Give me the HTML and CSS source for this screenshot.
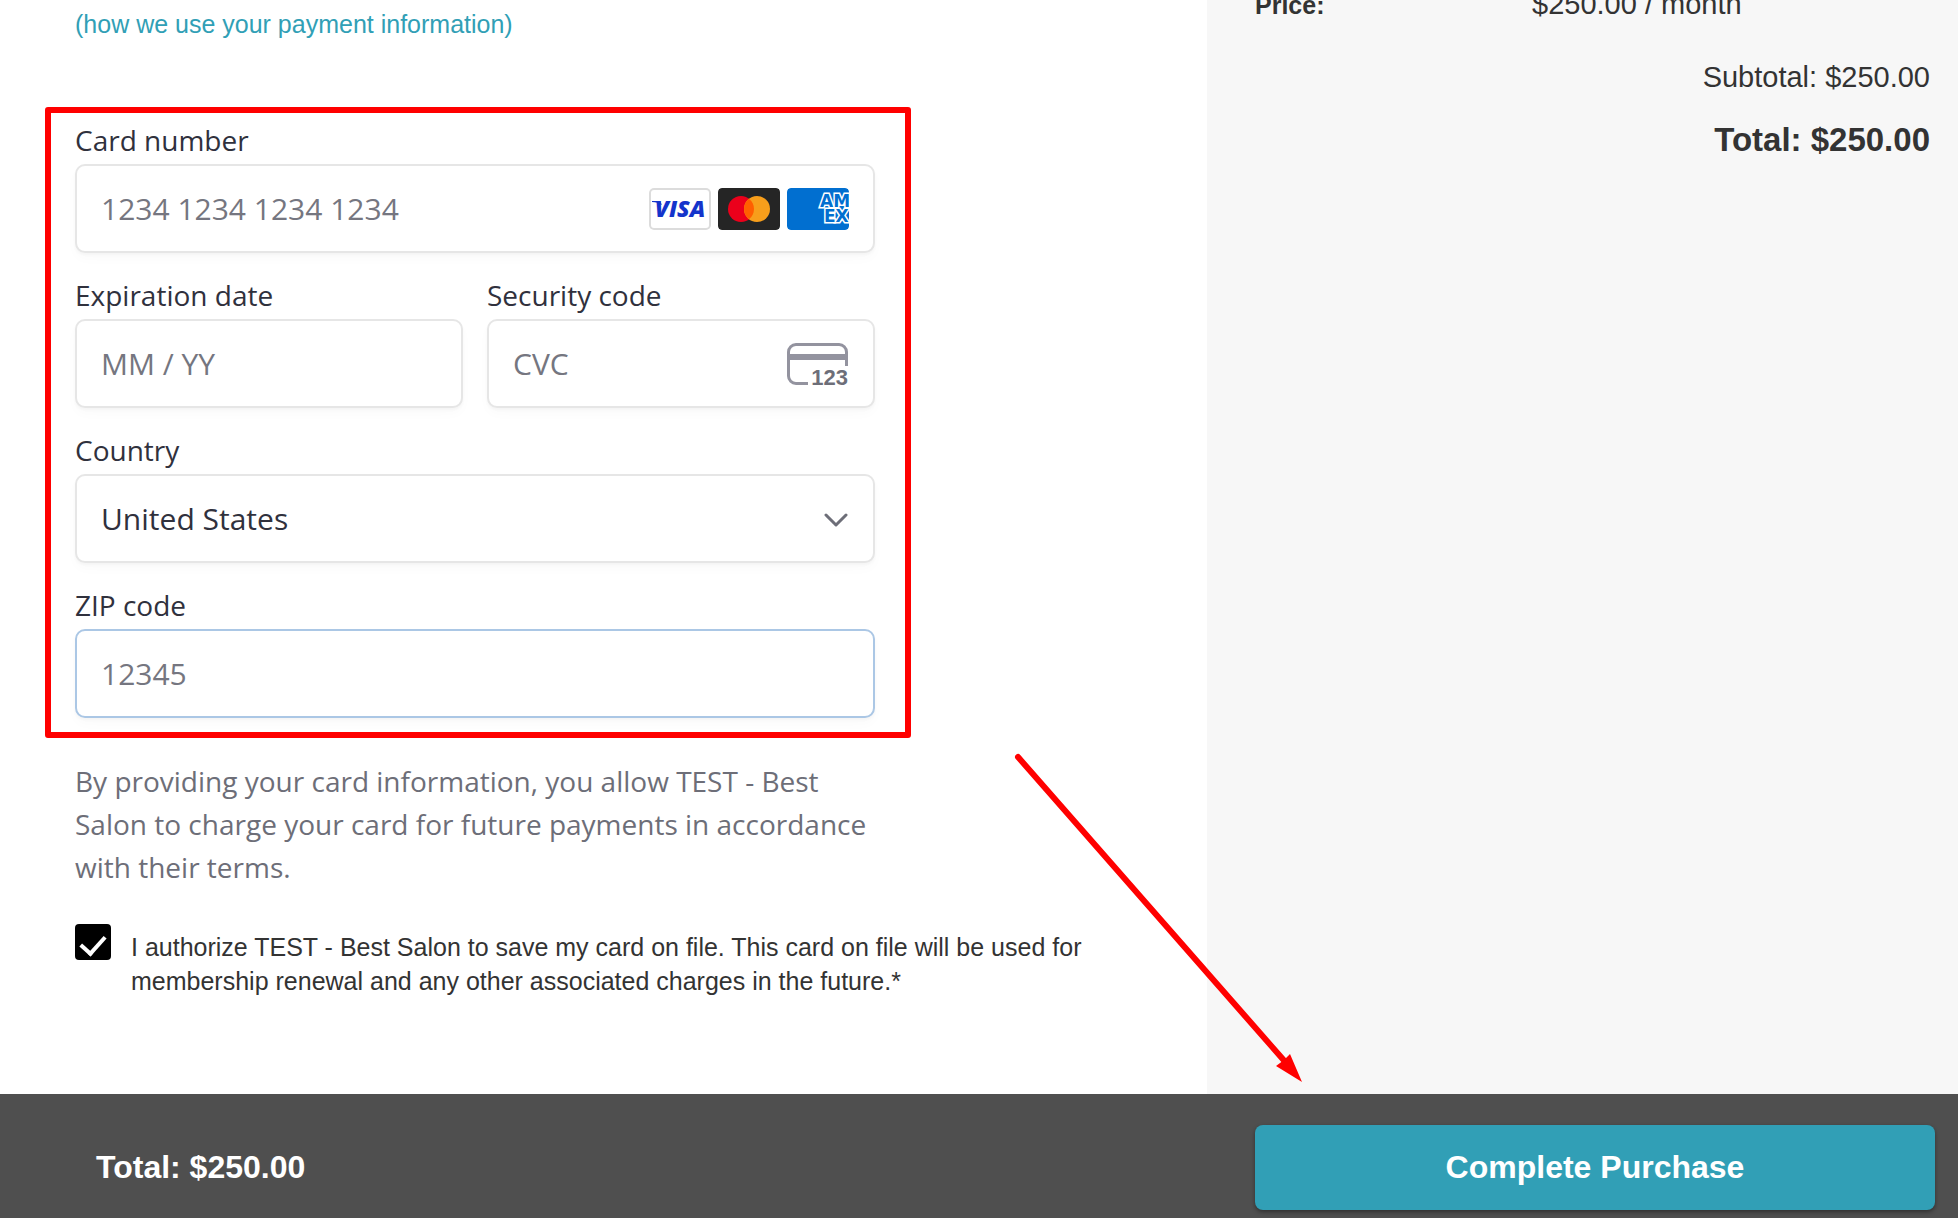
FILE: index.html
```
<!DOCTYPE html>
<html lang="en">

<head>
    <meta charset="UTF-8">
    <meta name="viewport" content="width=device-width, initial-scale=1.0">
    <title>Checkout</title>
    <link rel="stylesheet" href="styles.css">
</head>

<body>
    <div class="page">
        <main class="payment">
            <a class="info-link" href="#">(how we use your payment information)</a>

            <form class="card-form" id="payment-form">
                <div class="field">
                    <label for="number">Card number</label>
                    <div class="control">
                        <input type="text" id="number" placeholder="1234 1234 1234 1234">
                        <div class="brands">
                            <svg viewBox="0 0 62 42" role="img" aria-label="Visa">
                                <rect x="1" y="1" width="60" height="40" rx="4" fill="#fff" stroke="#dcdcdc" stroke-width="2" />
                                <text x="31" y="29" text-anchor="middle" class="visa">VISA</text>
                                <path d="M3 13h8l2 4c-3-2-6-3-10-3z" fill="#1434cb" />
                            </svg>
                            <svg viewBox="0 0 62 42" role="img" aria-label="Mastercard">
                                <rect width="62" height="42" rx="4" fill="#252525" />
                                <circle cx="23" cy="21" r="13" fill="#eb001b" />
                                <circle cx="39" cy="21" r="13" fill="#f79e1b" />
                                <path d="M31 10.750a13 13 0 0 1 0 20.500a13 13 0 0 1 0-20.500z" fill="#ff5f00" />
                            </svg>
                            <svg viewBox="0 0 62 42" role="img" aria-label="American Express">
                                <rect width="62" height="42" rx="4" fill="#016fd0" />
                                <text x="33" y="19" class="amex">AM</text>
                                <text x="37" y="34" class="amex">EX</text>
                            </svg>
                        </div>
                    </div>
                </div>

                <div class="row">
                    <div class="field">
                        <label for="expiry">Expiration date</label>
                        <div class="control">
                            <input type="text" id="expiry" placeholder="MM / YY">
                        </div>
                    </div>
                    <div class="field">
                        <label for="cvc">Security code</label>
                        <div class="control">
                            <input type="text" id="cvc" placeholder="CVC">
                            <svg class="cvc-icon" viewBox="0 0 62 44" aria-hidden="true">
                                <path d="M59.500 24V10a7.500 7.500 0 0 0-7.500-7.500H9A7.500 7.500 0 0 0 1.500 10v24A7.500 7.500 0 0 0 9 41.500h12" fill="none" stroke="#93939f" stroke-width="3" />
                                <rect x="2" y="12" width="58" height="6" fill="#93939f" />
                                <text x="61" y="43" text-anchor="end" class="cvc-digits">123</text>
                            </svg>
                        </div>
                    </div>
                </div>

                <div class="field">
                    <label for="country">Country</label>
                    <div class="control">
                        <select id="country">
                            <option>United States</option>
                        </select>
                        <svg class="chevron" viewBox="0 0 26 16" aria-hidden="true">
                            <path d="M3 4l10 10L23 4" />
                        </svg>
                    </div>
                </div>

                <div class="field">
                    <label for="zip">ZIP code</label>
                    <div class="control active">
                        <input type="text" id="zip" placeholder="12345">
                    </div>
                </div>
            </form>

            <p class="terms">By providing your card information, you allow TEST - Best Salon to charge your card for future payments in accordance with their terms.</p>

            <div class="authorize">
                <input type="checkbox" id="authorize" checked>
                <label for="authorize">I authorize TEST - Best Salon to save my card on file. This card on file will be used for membership renewal and any other associated charges in the future.*</label>
            </div>
        </main>

        <aside class="summary">
            <dl class="price">
                <dt>Price:</dt>
                <dd>$250.00 / month</dd>
            </dl>
            <p class="subtotal">Subtotal: $250.00</p>
            <p class="total">Total: $250.00</p>
        </aside>
    </div>

    <footer class="bar">
        <strong class="bar-total">Total: $250.00</strong>
        <button type="submit" form="payment-form" class="purchase">Complete Purchase</button>
    </footer>

    <svg class="arrow" viewBox="0 0 300 340" aria-hidden="true">
        <path d="M8 7L278 315" fill="none" stroke="#f00" stroke-width="6" stroke-linecap="round" />
        <path d="M292 332L280 304L274 310L266 316z" fill="#f00" />
    </svg>
</body>

</html>
```

FILE: styles.css
```
* {
    box-sizing: border-box;
}

body {
    display: flex;
    flex-direction: column;
    position: relative;
    min-height: 100vh;
    margin: 0;
    background-color: #fff;
    color: #333;
    font-family: "Liberation Sans", Arial, sans-serif;
    font-size: 25px;
}

p,
dl,
dd {
    margin: 0;
}

.page {
    display: grid;
    grid-template-columns: 1207fr 751fr;
    flex: 1;
}

/* payment side */
.payment {
    padding: 7px 45px 90px;
}

.info-link {
    display: block;
    margin-left: 30px;
    color: #319fb6;
    line-height: 34px;
    text-decoration: none;
}

.card-form {
    display: grid;
    grid-template-columns: minmax(0, 1fr);
    gap: 25px;
    max-width: 866px;
    margin-top: 66px;
    padding: 10px 30px 14px 24px;
    border: 6px solid #f00;
    border-radius: 3px;
    color: #30313d;
    font-family: "Open Sans", sans-serif;
    font-size: 28px;
}

.row {
    display: grid;
    grid-template-columns: repeat(2, minmax(0, 1fr));
    gap: 24px;
}

.field label {
    display: block;
    height: 41px;
    line-height: 34px;
}

.control {
    display: flex;
    align-items: center;
    height: 89px;
    padding: 0 24px;
    border: 2px solid #e6e6e6;
    border-radius: 10px;
    background-color: #fff;
    box-shadow: 0 2px 3px rgba(0, 0, 0, 0.03), 0 6px 12px rgba(0, 0, 0, 0.02);
}

.control.active {
    border-color: #abc7e5;
}

.control input,
.control select {
    flex: 1;
    min-width: 0;
    height: 100%;
    padding: 0;
    border: 0;
    outline: 0;
    background: transparent;
    color: #30313d;
    font: inherit;
    font-size: 30px;
    appearance: none;
}

.control input::placeholder {
    color: #757680;
    opacity: 1;
}

.brands {
    display: flex;
    gap: 7px;
}

.brands svg {
    width: 62px;
    height: 42px;
    border-radius: 4px;
}

.visa {
    fill: #1434cb;
    font: italic 800 23px "Open Sans", sans-serif;
}

.amex {
    fill: #016fd0;
    stroke: #fff;
    stroke-width: 3px;
    paint-order: stroke;
    font: bold 17px "DejaVu Sans", sans-serif;
}

.cvc-icon {
    width: 62px;
    height: 44px;
}

.cvc-digits {
    fill: #6d6e78;
    font: bold 22px "Liberation Sans", Arial, sans-serif;
}

.chevron {
    width: 26px;
    height: 16px;
    fill: none;
    stroke: #6d6e78;
    stroke-width: 3px;
    stroke-linecap: round;
    stroke-linejoin: round;
}

.terms {
    max-width: 835px;
    margin: 22px 0 0 30px;
    padding-right: 30px;
    color: #6d6e78;
    font-family: "Open Sans", sans-serif;
    font-size: 28px;
    line-height: 43px;
}

.authorize {
    display: flex;
    align-items: flex-start;
    gap: 20px;
    max-width: 1050px;
    margin: 35px 0 0 30px;
    line-height: 34px;
}

.authorize input {
    display: grid;
    flex: none;
    place-items: center;
    width: 36px;
    height: 36px;
    margin: 0;
    border-radius: 4px;
    background: #000;
    appearance: none;
}

.authorize input:checked::after {
    content: "";
    width: 20px;
    height: 11px;
    border: solid #fff;
    border-width: 0 0 4px 4px;
    transform: rotate(-48deg);
}

.authorize label {
    padding-top: 6px;
}

/* order summary */
.summary {
    padding: 0 28px 0 48px;
    overflow: hidden;
    background-color: #f7f7f7;
    font-size: 29px;
}

.price {
    display: grid;
    grid-template-columns: 277px 1fr;
    align-items: baseline;
    margin-top: -14px;
    line-height: 36px;
}

.price dt {
    font-size: 25px;
    font-weight: bold;
}

.subtotal,
.total {
    text-align: right;
}

.subtotal {
    margin-top: 36px;
    line-height: 36px;
}

.total {
    margin-top: 25px;
    font-size: 33px;
    font-weight: bold;
    line-height: 40px;
}

/* bottom bar */
.bar {
    display: grid;
    grid-template-columns: 1207fr 751fr;
    padding: 31px 0 8px;
    background-color: #4f4f4f;
    color: #fff;
    font-size: 32px;
}

.bar-total {
    align-self: center;
    padding-left: 96px;
}

.purchase {
    height: 85px;
    margin: 0 23px 0 48px;
    border: 0;
    border-radius: 8px;
    background-color: #319fb6;
    box-shadow: 0 2px 4px rgba(0, 0, 0, 0.4);
    color: #fff;
    font: inherit;
    font-weight: bold;
    cursor: pointer;
}

/* pointer to the purchase button */
.arrow {
    position: absolute;
    right: 648px;
    bottom: 128px;
    width: 300px;
    height: 340px;
    pointer-events: none;
}
```
